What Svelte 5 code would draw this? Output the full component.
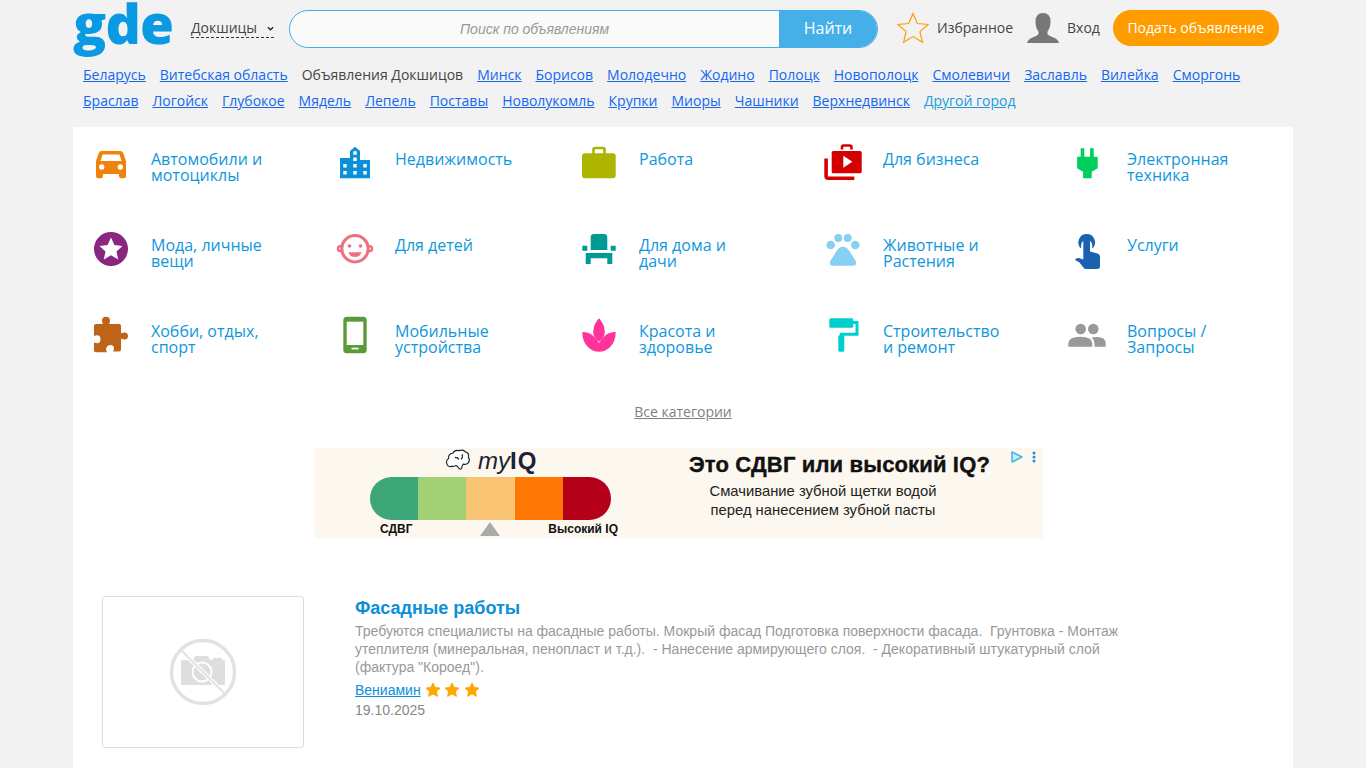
<script lang="ts">
    const towns = ['Минск', 'Борисов', 'Молодечно', 'Жодино', 'Полоцк', 'Новополоцк', 'Смолевичи', 'Заславль', 'Вилейка', 'Сморгонь',
        'Браслав', 'Логойск', 'Глубокое', 'Мядель', 'Лепель', 'Поставы', 'Новолукомль', 'Крупки', 'Миоры', 'Чашники', 'Верхнедвинск'];

    // иконки рисуем в сетке 40x40
    const categories = [
        { title: 'Автомобили и\nмотоциклы', icon: `<path fill="#f0820a" d="M11 8h18q2.500 0 3.300 2.300L35 18v15q0 2.300-2 2.300h-3q-2 0-2-2.300v-2H12v2q0 2.300-2 2.300H7q-2 0-2-2.300V18l2.700-7.700Q8.500 8 11 8z"/><path fill="#fff" d="M9.500 18l2-6.500h17l2 6.500z"/><circle fill="#fff" cx="10.700" cy="24" r="2.700"/><circle fill="#fff" cx="29.300" cy="24" r="2.700"/>` },
        { title: 'Недвижимость', icon: `<path fill="#0a8fd8" d="M5 15h10V8l5-4.300L25 8v9h10v18.300H5z"/><path fill="#fff" d="M18.300 8.300h3.400v3.400h-3.400zM18.300 14.600h3.400V18h-3.400zM8.300 21h3.400v3.400H8.300zM18.300 21h3.400v3.400h-3.400zM28.300 21h3.400v3.400h-3.400zM8.300 28h3.400v3.400H8.300zM18.300 28h3.400v3.400h-3.400zM28.300 28h3.400v3.400h-3.400z"/>` },
        { title: 'Работа', icon: `<path fill="none" stroke="#adb500" stroke-width="2.600" d="M14.500 11V6.500q0-1.500 1.500-1.500h8q1.500 0 1.500 1.500V11"/><rect fill="#adb500" x="3" y="10.300" width="33.700" height="25" rx="3"/>` },
        { title: 'Для бизнеса', icon: `<path fill="none" stroke="#d40000" stroke-width="2.600" d="M19 6.500V4q0-1.500 1.500-1.500h6Q28.500 2.500 28.500 4v2.500"/><rect fill="#d40000" x="8.700" y="8" width="30" height="22.300" rx="1.500"/><path fill="none" stroke="#d40000" stroke-width="3.600" d="M3.100 15.500V33q0 2.200 2.200 2.200h26"/><path fill="#fff" d="M20.300 12.700l9 6-9 6z"/>` },
        { title: 'Электронная\nтехника', icon: `<path fill="#00cf5f" d="M13.700 5.300h3.600v8.400h5.700V5.300h3.700v8.400h4v11.600l-6 3.500v6.400h-8.600v-6.400l-6-3.500V13.700h3.600z"/>` },
        { title: 'Мода, личные\nвещи', icon: `<circle fill="#8a2580" cx="20" cy="20" r="17"/><path fill="#fff" d="M20 8.500l3.400 7.500 8.100.9-6 5.500 1.700 8L20 26.300l-7.200 4.100 1.700-8-6-5.500 8.100-.9z"/>` },
        { title: 'Для детей', icon: `<circle fill="none" stroke="#ee6f7f" stroke-width="2.400" cx="5.300" cy="19.700" r="2.400"/><circle fill="none" stroke="#ee6f7f" stroke-width="2.400" cx="34.700" cy="19.700" r="2.400"/><circle fill="#fff" stroke="#ee6f7f" stroke-width="3" cx="20" cy="19.700" r="13.200"/><circle fill="#ee6f7f" cx="14.500" cy="17" r="1.800"/><circle fill="#ee6f7f" cx="25.500" cy="17" r="1.800"/><path fill="#ee6f7f" d="M13.300 23.300h13.400q-1.500 4.600-6.700 4.600t-6.700-4.600z"/>` },
        { title: 'Для дома и\nдачи', icon: `<path fill="#009b95" d="M15 5h10q3.300 0 3.300 3.300V21H11.700V8.300Q11.700 5 15 5zM3.300 16.700h5v5h-5zM31.700 16.700h5v5h-5zM6.700 24h26.600v11h-5v-5.700H11.700V35h-5z"/>` },
        { title: 'Животные и\nРастения', icon: `<g fill="#88d0f2"><circle cx="7.700" cy="16" r="4.300"/><circle cx="15.300" cy="9" r="4"/><circle cx="24.700" cy="9" r="4"/><circle cx="32.300" cy="16" r="4.300"/><path d="M20 17.700q4 0 7 5.300l5.600 8.800q2 4.900-3 4.900H10.400q-5 0-3-4.900L13 23q3-5.300 7-5.300z"/></g>` },
        { title: 'Услуги', icon: `<g fill="#1a62b0"><path d="M19.700 5a8.400 8.400 0 0 1 5.600 14.600v-3.200a5.600 5.600 0 1 0-11.200 0v3.200A8.400 8.400 0 0 1 19.700 5z"/><path d="M16.300 13a3.300 3.300 0 0 1 6.700 0v9.500l7.500 2q2.500.7 2.500 3.500v9q0 3-3 3H19q-2 0-3-2l-3.500-4.500L8 31q1-2.500 4-2l4.300 1.500z"/></g>` },
        { title: 'Хобби, отдых,\nспорт', icon: `<path fill="#bf6318" d="M15 1.700q4 0 4 3.800 0 2-1 3.500h10q2 0 2 2v7.500q1.500-1 3.500-1 3.500 0 3.500 3.500t-3.500 3.500q-2 0-3.500-1v11q0 2-2 2h-6q1-1.300 1-3 0-3.500-3.500-3.500T15 34q0 1.700 1 3.300H5q-2 0-2-2v-8q1.500 1 3 1 3.500 0 3.500-4t-3.500-4Q4.500 20.300 3 21.300V11q0-2 2-2h7q-1-1.500-1-3.500 0-3.800 4-3.800z"/>` },
        { title: 'Мобильные\nустройства', icon: `<rect fill="#5a9a3a" x="8.300" y="1.700" width="23.400" height="36.600" rx="3.500"/><rect fill="#fff" x="11.700" y="6.700" width="16.600" height="23.300"/><rect fill="#fff" x="16.500" y="32.700" width="7" height="1.700"/>` },
        { title: 'Красота и\nздоровье', icon: `<path fill="#ff3399" d="M20 3.300q5.800 6 5.800 14 0 5-5.800 9.400-5.800-4.400-5.800-9.400 0-8 5.800-14zM3.300 17q7 0 11 4t5.700 7q1.700-3 5.700-7t11-4q0 10-6 15.500-4.700 4.200-10.700 4.200T9.300 32.500Q3.300 27 3.300 17z"/>` },
        { title: 'Строительство\nи ремонт', icon: `<rect fill="#00cfcf" x="6.300" y="3.300" width="24" height="9.400" rx="1.500"/><path fill="none" stroke="#00cfcf" stroke-width="3" d="M30 7.500h4v11.700H18.300v4"/><rect fill="#00cfcf" x="15.300" y="20" width="6" height="16.700" rx="1.500"/>` },
        { title: 'Вопросы /\nЗапросы', icon: `<g fill="#999"><circle cx="13.700" cy="14" r="5.300"/><circle cx="26.300" cy="14" r="5.300"/><path d="M1.300 31.700v-3.400q0-6.600 12-6.600t12 6.600v3.400zM27.500 31.700v-3.400q0-3.500-3-5.800 14.200-2 14.200 5.800v3.400z"/></g>` }
    ];
</script>

<div class="page">
    <header class="top">
        <a class="logo" href="#/">gde</a>
        <div class="city">
            <span>Докшицы</span>
            <svg width="8" height="5" viewBox="0 0 8 5"><path d="M1 1l3 3 3-3" fill="none" stroke="#222" stroke-width="1.500"/></svg>
        </div>
        <form class="search">
            <input type="text" placeholder="Поиск по объявлениям" />
            <button type="button">Найти</button>
        </form>
        <a class="fav" href="#/">
            <svg width="32" height="32" viewBox="0 0 32 32"><path d="M16 1.500l4.300 10 10.800 1-8.200 7.100 2.500 10.600L16 24.600l-9.400 5.600 2.500-10.600L.9 12.500l10.800-1z" fill="none" stroke="#ff9c07" stroke-width="1.200"/></svg>
            Избранное
        </a>
        <a class="login" href="#/">
            <svg width="32" height="32" viewBox="0 0 32 32"><path fill="#777" d="M16 1q7.500 0 7.500 8.500 0 6-2.700 9.500-1 2 0 3.500 1.500 1.500 5.700 3 4.500 1.500 5.500 5.500H0q1-4 5.500-5.500 4.200-1.500 5.700-3 1-1.500 0-3.500-2.700-3.500-2.700-9.500Q8.500 1 16 1z"/></svg>
            Вход
        </a>
        <a class="add" href="#/">Подать объявление</a>
    </header>

    <nav class="towns">
        <a href="#/">Беларусь</a>
        <a href="#/">Витебская область</a>
        <span>Объявления Докшицов</span>
        {#each towns as town}
            <a href="#/">{town}</a>
        {/each}
        <a class="other" href="#/">Другой город</a>
    </nav>

    <main class="card">
        <div class="cats">
            {#each categories as cat}
                <a class="cat" href="#/">
                    <svg width="40" height="40" viewBox="0 0 40 40">{@html cat.icon}</svg>
                    <span>{cat.title}</span>
                </a>
            {/each}
        </div>

        <a class="all" href="#/">Все категории</a>

        <div class="ad">
            <div class="ad-left">
                <div class="iq-logo">
                    <svg width="28" height="25" viewBox="0 0 26 24"><path d="M6 18q-5 0-5-4.500 0-2.500 2-3.500-.5-4.500 4-5 2-3.500 6-2.500 4-1.500 6.500 1.500 3.500 1 2.500 5 2 2.500 0 5-2 2.500-5 1.500-1 1-1.500 4-1.500 2-3-.5-1-2.500-3-2-2 1-3.500.5Q6 18 6 18zM9 9q3 0 4 2m3-5q1 3-1 5" fill="#fff" stroke="#1b2233" stroke-width="1.100"/></svg>
                    <span><i>my</i><b>IQ</b></span>
                </div>
                <div class="scale">
                    <i class="s1"></i><i class="s2"></i><i class="s3"></i><i class="s4"></i><i class="s5"></i>
                </div>
                <div class="scale-labels">
                    <span>СДВГ</span>
                    <span>Высокий IQ</span>
                </div>
                <div class="marker"></div>
            </div>
            <div class="ad-right">
                <div class="ad-title">Это СДВГ или высокий IQ?</div>
                <p>Смачивание зубной щетки водой<br />перед нанесением зубной пасты</p>
            </div>
            <div class="ad-icons">
                <svg width="14" height="14" viewBox="0 0 14 14"><path d="M2 2l10 5-10 5z" fill="#cdeaf8" stroke="#4db5e8" stroke-width="1.600" stroke-linejoin="round"/></svg>
                <svg width="6" height="14" viewBox="0 0 6 14"><g fill="#1296d4"><circle cx="3" cy="3" r="1.500"/><circle cx="3" cy="7" r="1.500"/><circle cx="3" cy="11" r="1.500"/></g></svg>
            </div>
        </div>

        <article class="item">
            <div class="photo">
                <svg width="68" height="68" viewBox="0 0 68 68">
                    <circle cx="34" cy="34" r="31.500" fill="none" stroke="#e2e2e2" stroke-width="3.400"/>
                    <path fill="#dedede" d="M12 22h12l2-4h13l2 4h3v-2h9v2h3v25H12z"/>
                    <circle cx="33" cy="34" r="9.500" fill="#dedede" stroke="#fff" stroke-width="2"/>
                    <path d="M14 14l40 40" stroke="#fff" stroke-width="4.500"/>
                    <path d="M12.500 12.500l43 43" stroke="#e2e2e2" stroke-width="2"/>
                </svg>
            </div>
            <div class="info">
                <h3>Фасадные работы</h3>
                <p class="text">Требуются специалисты на фасадные работы. Мокрый фасад Подготовка поверхности фасада.  Грунтовка - Монтаж утеплителя (минеральная, пенопласт и т.д.).  - Нанесение армирующего слоя.  - Декоративный штукатурный слой (фактура "Короед").</p>
                <div class="author">
                    <a href="#/">Вениамин</a>
                    <span class="stars">
                        {#each [1, 2, 3] as n}
                            <svg width="16" height="16" viewBox="0 0 16 16" data-n={n}><path fill="#ffa800" stroke="#ffa800" stroke-linejoin="round" d="M8 1l2.100 4.500 4.900.6-3.600 3.300 1 4.900L8 11.900l-4.400 2.400 1-4.900L1 6.100l4.900-.6z"/></svg>
                        {/each}
                    </span>
                </div>
                <div class="date">19.10.2025</div>
            </div>
        </article>
    </main>
</div>

<style>
    :global(body) {
        background: #f2f2f2;
        font-family: "Open Sans", sans-serif;
    }

    .page {
        width: 1220px;
        margin-left: 73px;
    }

    .top {
        display: flex;
        height: 62px;
        font-size: 14px;
        line-height: 32px;
        color: #444;
    }

    .top a {
        color: #444;
        text-decoration: none;
    }

    .top .logo {
        flex: none;
        width: 98px;
        height: 56px;
        margin-right: 20px;
        font-size: 55px;
        font-weight: 800;
        line-height: 45px;
        letter-spacing: -0.8px;
        color: #0a9ae3;
    }

    .city {
        display: flex;
        align-items: center;
        gap: 10px;
        width: 83px;
        height: 18px;
        margin-top: 19px;
        border-bottom: 1px dashed #333;
        line-height: 18px;
        white-space: nowrap;
    }

    .city span {
        width: 66px;
    }

    .search {
        display: flex;
        width: 589px;
        height: 38px;
        margin: 10px 0 0 15px;
        border: 1px solid #45b0e8;
        border-radius: 19px;
        box-sizing: border-box;
        overflow: hidden;
        background: #fafafa;
    }

    .search input {
        flex: 1;
        min-width: 0;
        border: none;
        outline: none;
        background: transparent;
        text-align: center;
        font-family: "Liberation Sans", sans-serif;
        font-size: 14px;
        font-style: italic;
    }

    .search input::placeholder {
        color: #999;
    }

    .search button {
        width: 98px;
        padding: 0 0 2px;
        border: none;
        background: #45b0e8;
        color: #fff;
        font-family: "Open Sans", sans-serif;
        font-size: 16px;
    }

    .fav,
    .login {
        display: flex;
        align-items: center;
        gap: 8px;
        height: 32px;
        margin-top: 12px;
        white-space: nowrap;
    }

    .fav svg,
    .login svg {
        flex: none;
    }

    .fav {
        margin-left: 19px;
    }

    .login {
        margin-left: 14px;
    }

    .top .add {
        height: 36px;
        margin: 10px 0 0 13px;
        padding: 0 14.500px;
        border-radius: 18px;
        background: #ff9c00;
        color: #fff;
        line-height: 35px;
    }

    .towns {
        display: flex;
        flex-wrap: wrap;
        column-gap: 14px;
        padding-left: 10px;
        margin-bottom: 13px;
        font-size: 14px;
        line-height: 26px;
        color: #444;
    }

    .towns a {
        color: #1467f0;
    }

    .towns a.other {
        color: #1d9be0;
    }

    .card {
        background: #fff;
        padding-top: 16px;
        padding-bottom: 20px;
    }

    .cats {
        display: grid;
        grid-template-columns: repeat(5, 244px);
        row-gap: 46px;
        padding-left: 18px;
    }

    .cat {
        display: flex;
        gap: 20px;
        height: 40px;
        font-size: 16px;
        line-height: 16px;
        color: #0f97dc;
        text-decoration: none;
    }

    .cat span {
        padding-top: 8px;
        white-space: pre-line;
    }

    .all {
        display: block;
        margin: 47px 0 26px;
        text-align: center;
        font-size: 14px;
        line-height: 20px;
        color: #808080;
    }

    .ad {
        position: relative;
        display: flex;
        width: 728px;
        height: 90px;
        margin-left: 242px;
        background: #fdf8ef;
        font-family: "Liberation Sans", sans-serif;
        color: #111;
    }

    .ad-left {
        position: relative;
        width: 374px;
        padding-left: 55px;
        box-sizing: border-box;
    }

    .iq-logo {
        display: flex;
        align-items: center;
        gap: 5px;
        width: 241px;
        height: 29px;
        padding: 0 0 4px 75px;
        box-sizing: border-box;
        font-size: 24px;
        color: #1b2233;
    }

    .iq-logo i {
        font-style: italic;
    }

    .iq-logo b {
        font-weight: 700;
        letter-spacing: 1px;
    }

    .scale {
        display: flex;
        width: 241px;
        height: 43px;
        border-radius: 22px;
        overflow: hidden;
    }

    .scale i {
        flex: 1;
    }

    .s1 { background: #3da678; }
    .s2 { background: #a2d175; }
    .s3 { background: #fac475; }
    .s4 { background: #ff7705; }
    .s5 { background: #b40018; }

    .scale-labels {
        display: flex;
        justify-content: space-between;
        width: 248px;
        padding: 2px 0 0 10px;
        box-sizing: border-box;
        font-size: 12px;
        font-weight: 700;
        line-height: 14px;
        white-space: nowrap;
    }

    .marker {
        position: absolute;
        left: 165px;
        bottom: 2px;
        width: 0;
        height: 0;
        border-left: 10px solid transparent;
        border-right: 10px solid transparent;
        border-bottom: 14px solid #aaa;
    }

    .ad-title {
        margin-top: 3px;
        font-size: 22px;
        font-weight: 700;
        line-height: 28px;
        letter-spacing: 0.15px;
        white-space: nowrap;
        -webkit-text-stroke: 0.4px #111;
    }

    .ad-right p {
        margin: 3px 0 0;
        width: 268px;
        text-align: center;
        font-size: 14.800px;
        line-height: 19px;
        color: #222;
    }

    .ad-icons {
        position: absolute;
        top: 1px;
        right: 1px;
        display: flex;
        align-items: center;
        gap: 7px;
        width: 32px;
        height: 15px;
        box-sizing: border-box;
    }

    .item {
        display: flex;
        gap: 51px;
        margin-top: 58px;
        padding-left: 29px;
    }

    .photo {
        display: flex;
        align-items: center;
        justify-content: center;
        flex: none;
        width: 202px;
        height: 152px;
        border: 1px solid #ddd;
        border-radius: 3px;
        box-sizing: border-box;
    }

    .info {
        width: 770px;
        font-family: "Liberation Sans", sans-serif;
        font-size: 14px;
        color: #999;
    }

    .info h3 {
        margin: 0;
        font-size: 18px;
        line-height: 24px;
        color: #0a8fd8;
    }

    .text {
        margin: 2px 0 0;
        line-height: 18px;
        white-space: pre-wrap;
    }

    .author {
        display: flex;
        align-items: center;
        gap: 4px;
        height: 18px;
        margin-top: 5px;
    }

    .author a {
        color: #0a8fd8;
    }

    .stars {
        display: flex;
        gap: 3.500px;
    }

    .date {
        margin-top: 2px;
        line-height: 18px;
        color: #888;
    }
</style>
